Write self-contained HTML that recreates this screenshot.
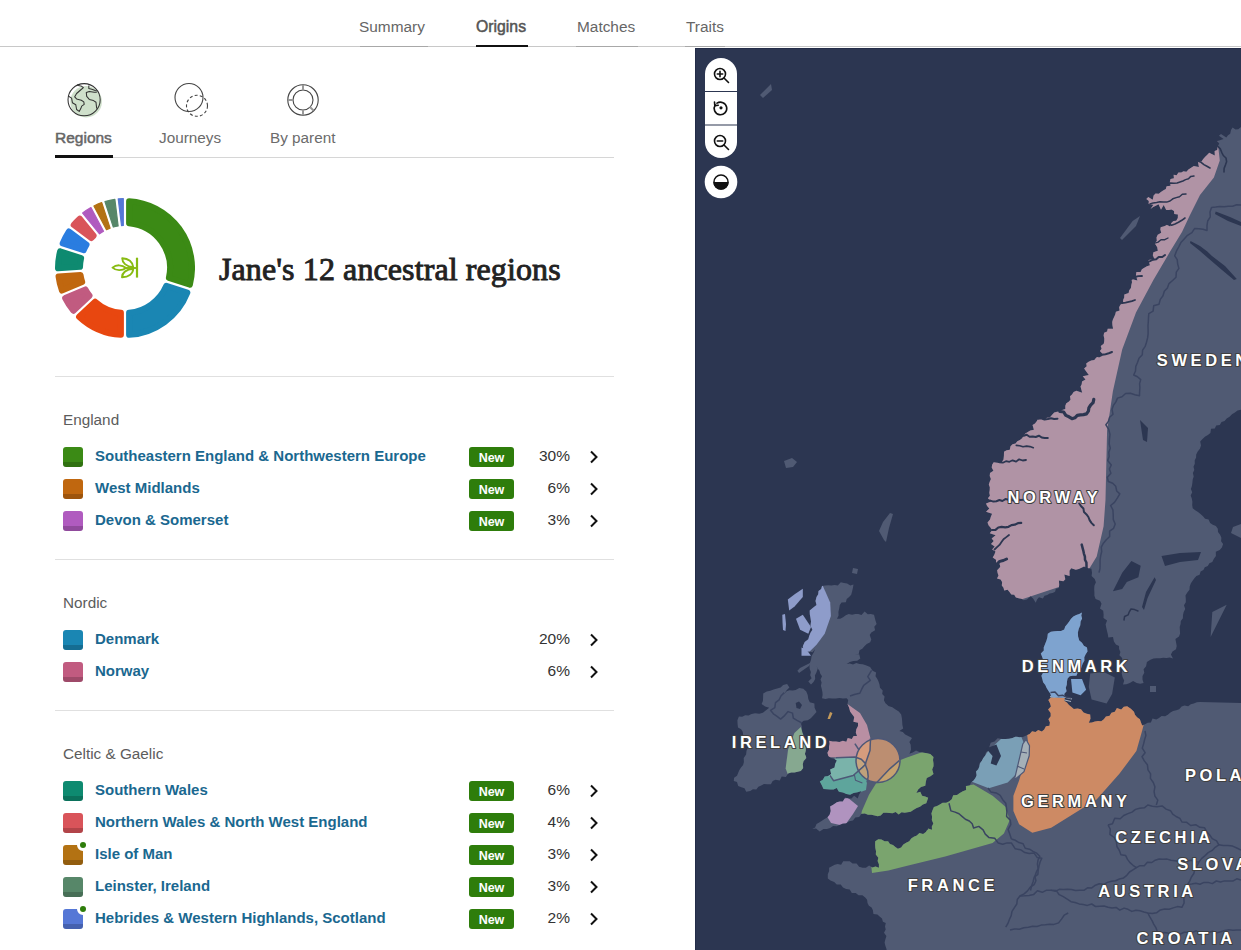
<!DOCTYPE html>
<html><head><meta charset="utf-8">
<style>
*{margin:0;padding:0;box-sizing:border-box}
html,body{width:1241px;height:950px;overflow:hidden;background:#fff;font-family:"Liberation Sans",sans-serif;color:#333}
.abs{position:absolute}
.hdr{position:absolute;left:0;top:0;width:1241px;height:47px;border-bottom:1px solid #c8c8c8}
.tab{position:absolute;top:18px;font-size:15.4px;color:#666;white-space:nowrap;line-height:18px}
.tul{position:absolute;top:46px;height:1px;background:#a8a8a8}
.tabline{position:absolute;height:2px;background:#111;top:45px}
.sub{position:absolute;top:129px;font-size:15.3px;color:#6b6b6b;white-space:nowrap;line-height:18px}
.hr{position:absolute;left:55px;width:559px;height:1px;background:#e0e0e0}
.grp{position:absolute;left:63px;font-size:15.3px;color:#5c5c5c;line-height:18px;white-space:nowrap}
.row{position:absolute;left:63px;width:540px;height:20px}
.sw{position:absolute;left:0;top:0;width:20px;height:20px;border-radius:3px;overflow:hidden}
.sw i{position:absolute;left:0;bottom:0;width:20px;height:5px;background:rgba(0,0,0,.18)}
.nm{position:absolute;left:32px;top:0px;font-size:15px;font-weight:700;color:#1a6890;white-space:nowrap;line-height:18px}
.new{position:absolute;left:406px;top:0;width:45px;height:20px;border-radius:3px;background:#2e7d0b;color:#fff;font-size:12.5px;font-weight:700;text-align:center;line-height:22px}
.pct{position:absolute;right:33px;top:0px;font-size:15.5px;color:#333;line-height:18px}
.chev{position:absolute;left:526px;top:3px}
.map{position:absolute;left:695px;top:48px;width:546px;height:902px;background:#2c3651;overflow:hidden}
</style></head><body>
<div class="hdr"></div>
<div class="tab" style="left:359px">Summary</div><div class="tul" style="left:360px;width:68px"></div>
<div class="tab" style="left:476px;font-weight:400;color:#555;font-size:15.8px;-webkit-text-stroke:0.5px #555">Origins</div>
<div class="tab" style="left:577px">Matches</div><div class="tul" style="left:576px;width:62px"></div>
<div class="tab" style="left:686px">Traits</div><div class="tul" style="left:685px;width:40px"></div>
<div class="tabline" style="left:476px;width:52px"></div>

<!-- subtabs -->
<svg class="abs" style="left:55px;top:75px" width="300" height="50" viewBox="0 0 300 50">
  <circle cx="31.1" cy="26.7" r="15.8" fill="#cfe0cb"/><circle cx="29.1" cy="24.7" r="16.1" fill="none" stroke="#333" stroke-width="1.05"/><path d="M13.2 21 L16.6 23.1 L17.4 27.7 L20.8 29.8 L21.6 34.5 L24.2 36.4 L25.8 33.6 L26.7 31.1 L29.2 29.4 L28.8 26.9 L26.3 25.2 L21.6 23.9 L19.7 21.8 L21.6 18.5 L25 15.5 L28.4 12.6 L26.7 11.3 L23.3 10.5 L22 9.8" fill="none" stroke="#333" stroke-width="1.05" stroke-linejoin="round"/><path d="M33.8 10.5 L33.8 13.4 L36.8 14.3 L40.2 15.5 L41.8 15.9" fill="none" stroke="#333" stroke-width="1.05" stroke-linejoin="round"/><path d="M41.8 17.2 L39.3 17.2 L34.3 16.4 L31.3 17.6 L31.7 21.4 L34.3 24.4 L38.5 25.6 L41 27.3 L41.4 31.1 L41.8 33.6" fill="none" stroke="#333" stroke-width="1.05" stroke-linejoin="round"/>
  <circle cx="134" cy="22.5" r="14" fill="none" stroke="#444" stroke-width="1.1"/>
  <circle cx="142" cy="30.8" r="10.5" fill="none" stroke="#444" stroke-width="1.1" stroke-dasharray="3 2.2"/>
  <circle cx="248" cy="25" r="15.2" fill="none" stroke="#444" stroke-width="1.1"/>
  <circle cx="248" cy="25" r="10" fill="none" stroke="#444" stroke-width="1.1"/>
  <path d="M248 10v5 M248 35v5 M233 25h5 M255 32l3.5 3.5" stroke="#999" stroke-width="2"/>
</svg>
<div class="sub" style="left:55px;font-weight:400;color:#666;font-size:15.5px;-webkit-text-stroke:0.5px #666">Regions</div>
<div class="sub" style="left:159px">Journeys</div>
<div class="sub" style="left:270px">By parent</div>
<div class="abs" style="left:55px;top:157px;width:559px;height:1px;background:#d6d6d6"></div>
<div class="abs" style="left:55px;top:155px;width:58px;height:3px;background:#111"></div>

<!-- donut -->
<svg id="donut" class="abs" style="left:55px;top:198px" width="140" height="140" viewBox="0 0 140 140"><path d="M74.10 3.13A67 67 0 0 1 134.87 86.77L113.89 79.95A45 45 0 0 0 74.09 25.19Z" fill="#3b8a15" stroke="#3b8a15" stroke-width="6" stroke-linejoin="round"/><path d="M132.34 94.56A67 67 0 0 1 74.10 136.87L74.09 114.81A45 45 0 0 0 111.35 87.74Z" fill="#1a86b3" stroke="#1a86b3" stroke-width="6" stroke-linejoin="round"/><path d="M65.90 136.87A67 67 0 0 1 24.06 118.77L40.14 103.66A45 45 0 0 0 65.91 114.81Z" fill="#e84710" stroke="#e84710" stroke-width="6" stroke-linejoin="round"/><path d="M18.45 112.79A67 67 0 0 1 10.15 100.11L30.42 91.42A45 45 0 0 0 34.53 97.69Z" fill="#c15b80" stroke="#c15b80" stroke-width="6" stroke-linejoin="round"/><path d="M6.92 92.58A67 67 0 0 1 3.53 78.40L25.54 76.98A45 45 0 0 0 27.20 83.89Z" fill="#c0670f" stroke="#c0670f" stroke-width="6" stroke-linejoin="round"/><path d="M3.00 70.23A67 67 0 0 1 5.13 53.23L26.11 60.05A45 45 0 0 0 25.02 68.81Z" fill="#0e8a70" stroke="#0e8a70" stroke-width="6" stroke-linejoin="round"/><path d="M7.66 45.44A67 67 0 0 1 13.81 33.52L31.54 46.64A45 45 0 0 0 28.65 52.26Z" fill="#2a7de0" stroke="#2a7de0" stroke-width="6" stroke-linejoin="round"/><path d="M18.68 26.93A67 67 0 0 1 24.73 20.61L38.62 37.75A45 45 0 0 0 36.41 40.05Z" fill="#d9545a" stroke="#d9545a" stroke-width="6" stroke-linejoin="round"/><path d="M27.66 15.01A69.4 69.4 0 0 1 35.93 9.54L48.52 33.21A42.6 42.6 0 0 0 44.53 35.85Z" fill="#b05bbf" stroke="#b05bbf" stroke-width="1.2" stroke-linejoin="round"/><path d="M38.93 7.94A69.4 69.4 0 0 1 46.72 4.62L55.09 30.09A42.6 42.6 0 0 0 51.52 31.62Z" fill="#b37213" stroke="#b37213" stroke-width="1.2" stroke-linejoin="round"/><path d="M49.95 3.56A69.4 69.4 0 0 1 59.86 1.35L63.13 27.96A42.6 42.6 0 0 0 58.32 29.03Z" fill="#578769" stroke="#578769" stroke-width="1.2" stroke-linejoin="round"/><path d="M63.23 0.93A69.4 69.4 0 0 1 68.30 0.62L68.30 27.43A42.6 42.6 0 0 0 66.50 27.54Z" fill="#5577d6" stroke="#5577d6" stroke-width="1.2" stroke-linejoin="round"/><g fill="none" stroke="#88bb12" stroke-width="1.9" stroke-linejoin="round"><path d="M82 59.7V79.6" stroke-width="2.2"/><path d="M70.5 70H81"/><path d="M57.5 69.6C61 66.6 67 66.4 71 70C67 73 61 72.8 57.5 69.6Z"/><path d="M78.3 69.3C77.8 64 73.5 60.3 67.2 60.2C67.2 64.5 71 68.6 78.3 69.3Z"/><path d="M78.3 70.7C77.8 76 73.5 79.4 67 79.3C67.2 75 71 71.4 78.3 70.7Z"/></g></svg>
<div class="abs" style="left:219px;top:251px;font-family:'Liberation Serif',serif;font-size:32px;font-weight:400;letter-spacing:0.1px;-webkit-text-stroke:0.9px #222;color:#222;white-space:nowrap;line-height:36px">Jane's 12 ancestral regions</div>

<div class="hr" style="top:376px"></div>
<div class="grp" style="top:411px">England</div>
<div class="row" style="top:447px"><div class="sw" style="background:#3b8a15"><i></i></div><div class="nm">Southeastern England &amp; Northwestern Europe</div><div class="new">New</div><div class="pct">30%</div><svg class="chev" width="10" height="14" viewBox="0 0 10 14"><path d="M2 1.5L7.5 7L2 12.5" fill="none" stroke="#111" stroke-width="2"/></svg></div>
<div class="row" style="top:479px"><div class="sw" style="background:#c0670f"><i></i></div><div class="nm">West Midlands</div><div class="new">New</div><div class="pct">6%</div><svg class="chev" width="10" height="14" viewBox="0 0 10 14"><path d="M2 1.5L7.5 7L2 12.5" fill="none" stroke="#111" stroke-width="2"/></svg></div>
<div class="row" style="top:511px"><div class="sw" style="background:#b05bbf"><i></i></div><div class="nm">Devon &amp; Somerset</div><div class="new">New</div><div class="pct">3%</div><svg class="chev" width="10" height="14" viewBox="0 0 10 14"><path d="M2 1.5L7.5 7L2 12.5" fill="none" stroke="#111" stroke-width="2"/></svg></div>
<div class="row" style="top:630px"><div class="sw" style="background:#1a86b3"><i></i></div><div class="nm">Denmark</div><div class="pct">20%</div><svg class="chev" width="10" height="14" viewBox="0 0 10 14"><path d="M2 1.5L7.5 7L2 12.5" fill="none" stroke="#111" stroke-width="2"/></svg></div>
<div class="row" style="top:662px"><div class="sw" style="background:#c15b80"><i></i></div><div class="nm">Norway</div><div class="pct">6%</div><svg class="chev" width="10" height="14" viewBox="0 0 10 14"><path d="M2 1.5L7.5 7L2 12.5" fill="none" stroke="#111" stroke-width="2"/></svg></div>
<div class="row" style="top:781px"><div class="sw" style="background:#0e8a70"><i></i></div><div class="nm">Southern Wales</div><div class="new">New</div><div class="pct">6%</div><svg class="chev" width="10" height="14" viewBox="0 0 10 14"><path d="M2 1.5L7.5 7L2 12.5" fill="none" stroke="#111" stroke-width="2"/></svg></div>
<div class="row" style="top:813px"><div class="sw" style="background:#d9545a"><i></i></div><div class="nm">Northern Wales &amp; North West England</div><div class="new">New</div><div class="pct">4%</div><svg class="chev" width="10" height="14" viewBox="0 0 10 14"><path d="M2 1.5L7.5 7L2 12.5" fill="none" stroke="#111" stroke-width="2"/></svg></div>
<div class="row" style="top:845px"><svg class="sw" width="20" height="20" style="border-radius:0;overflow:visible"><path d="M3 0H14A6 6 0 0 0 20 6V17A3 3 0 0 1 17 20H3A3 3 0 0 1 0 17V3A3 3 0 0 1 3 0Z" fill="#b37213"/><path d="M0 15H20V17A3 3 0 0 1 17 20H3A3 3 0 0 1 0 17Z" fill="rgba(0,0,0,.18)"/><circle cx="20" cy="0" r="3" fill="#2e7d0b"/></svg><div class="nm">Isle of Man</div><div class="new">New</div><div class="pct">3%</div><svg class="chev" width="10" height="14" viewBox="0 0 10 14"><path d="M2 1.5L7.5 7L2 12.5" fill="none" stroke="#111" stroke-width="2"/></svg></div>
<div class="row" style="top:877px"><div class="sw" style="background:#578769"><i></i></div><div class="nm">Leinster, Ireland</div><div class="new">New</div><div class="pct">3%</div><svg class="chev" width="10" height="14" viewBox="0 0 10 14"><path d="M2 1.5L7.5 7L2 12.5" fill="none" stroke="#111" stroke-width="2"/></svg></div>
<div class="row" style="top:909px"><svg class="sw" width="20" height="20" style="border-radius:0;overflow:visible"><path d="M3 0H14A6 6 0 0 0 20 6V17A3 3 0 0 1 17 20H3A3 3 0 0 1 0 17V3A3 3 0 0 1 3 0Z" fill="#5577d6"/><path d="M0 15H20V17A3 3 0 0 1 17 20H3A3 3 0 0 1 0 17Z" fill="rgba(0,0,0,.18)"/><circle cx="20" cy="0" r="3" fill="#2e7d0b"/></svg><div class="nm">Hebrides &amp; Western Highlands, Scotland</div><div class="new">New</div><div class="pct">2%</div><svg class="chev" width="10" height="14" viewBox="0 0 10 14"><path d="M2 1.5L7.5 7L2 12.5" fill="none" stroke="#111" stroke-width="2"/></svg></div>
<div class="hr" style="top:559px"></div>
<div class="grp" style="top:594px">Nordic</div>
<div class="hr" style="top:710px"></div>
<div class="grp" style="top:745px">Celtic &amp; Gaelic</div>

<div class="map" id="map"><svg width="546" height="902" viewBox="695 48 546 902" style="display:block">
<defs>
<clipPath id="cS"><path d="M1241.0 127.0 L1238.3 129.2 L1235.5 129.6 L1232.6 127.4 L1231.0 129.9 L1230.2 133.7 L1228.0 135.3 L1226.3 137.6 L1221.0 134.1 L1218.9 135.8 L1223.6 138.9 L1217.5 141.0 L1219.2 143.8 L1217.8 146.3 L1217.2 149.9 L1214.6 150.9 L1214.8 155.5 L1209.2 152.8 L1207.3 154.7 L1205.2 156.7 L1203.2 158.9 L1201.5 161.4 L1197.8 161.0 L1198.9 166.9 L1193.8 166.0 L1191.1 167.7 L1188.4 169.5 L1186.4 171.8 L1183.5 171.3 L1181.2 172.6 L1178.4 172.4 L1176.6 175.3 L1173.6 174.7 L1173.9 178.2 L1170.5 179.1 L1169.8 181.9 L1170.6 185.7 L1166.5 186.3 L1165.8 189.1 L1163.1 190.5 L1160.9 192.1 L1158.7 193.8 L1155.5 193.4 L1153.6 195.5 L1152.7 199.7 L1148.3 196.9 L1146.3 199.0 L1148.8 200.9 L1148.6 203.9 L1153.4 204.8 L1150.5 209.0 L1153.2 206.9 L1155.8 205.8 L1158.5 204.2 L1161.0 209.8 L1163.7 205.0 L1166.2 210.0 L1168.9 209.9 L1171.5 209.5 L1174.0 210.9 L1174.2 214.0 L1177.9 214.6 L1177.8 217.9 L1176.2 220.7 L1173.4 221.1 L1171.3 223.0 L1170.2 226.6 L1166.1 224.4 L1163.5 225.2 L1161.0 226.3 L1160.3 229.2 L1161.2 232.8 L1157.7 234.7 L1156.5 237.5 L1156.8 240.8 L1154.7 243.2 L1157.2 247.3 L1157.8 250.7 L1153.4 252.3 L1152.8 255.2 L1154.4 259.0 L1148.4 260.0 L1149.9 265.2 L1146.9 266.2 L1144.3 267.7 L1141.9 269.3 L1140.6 272.0 L1136.4 272.0 L1135.9 275.3 L1137.4 280.5 L1131.5 279.0 L1132.0 282.2 L1131.3 285.0 L1130.9 287.9 L1129.2 290.3 L1128.6 293.1 L1124.3 294.4 L1124.2 297.4 L1123.1 300.0 L1123.0 303.0 L1120.4 304.8 L1119.1 307.2 L1119.6 310.5 L1115.9 311.7 L1115.2 314.4 L1114.1 316.9 L1112.9 319.4 L1112.2 322.1 L1112.4 325.3 L1113.1 328.8 L1107.7 328.7 L1107.1 331.5 L1104.1 332.8 L1103.6 335.6 L1104.3 338.5 L1104.2 341.2 L1103.7 343.8 L1100.7 345.9 L1101.6 348.8 L1099.9 351.1 L1103.1 354.6 L1099.0 356.4 L1096.3 357.6 L1094.3 360.0 L1091.2 360.4 L1088.6 361.8 L1086.2 363.4 L1086.7 366.3 L1084.1 368.4 L1086.2 371.6 L1088.8 375.0 L1082.7 376.2 L1085.5 379.6 L1082.0 381.5 L1081.7 384.2 L1080.5 386.6 L1082.2 392.7 L1076.4 390.7 L1073.6 392.0 L1072.0 394.5 L1070.0 396.3 L1070.5 399.8 L1068.7 401.8 L1066.3 403.3 L1065.3 405.8 L1065.3 408.9 L1062.2 409.9 L1059.9 411.5 L1057.0 411.8 L1054.2 412.6 L1051.9 414.9 L1049.8 417.5 L1046.9 417.8 L1044.6 420.0 L1041.1 418.7 L1038.1 418.7 L1036.7 421.2 L1035.0 423.4 L1032.5 424.9 L1033.9 429.8 L1030.3 430.4 L1027.8 432.0 L1025.3 433.5 L1023.6 435.7 L1022.1 438.3 L1019.9 439.9 L1017.3 441.2 L1015.5 443.5 L1012.5 444.2 L1010.5 446.2 L1009.8 449.7 L1006.6 450.2 L1004.0 451.7 L1003.9 455.8 L1003.5 459.5 L1001.8 462.0 L998.8 463.1 L993.7 462.2 L992.1 464.7 L991.7 467.5 L993.4 470.7 L990.0 473.1 L989.7 475.9 L990.9 479.0 L989.7 481.7 L988.8 484.4 L989.8 487.3 L989.7 490.1 L989.3 492.8 L989.9 495.7 L987.9 498.2 L991.1 501.6 L986.0 503.5 L987.1 506.1 L989.3 508.6 L986.0 511.7 L992.1 513.8 L990.8 516.7 L990.0 519.5 L987.5 522.6 L988.5 525.2 L990.6 527.7 L992.1 530.2 L989.8 533.3 L995.6 535.2 L991.6 538.5 L993.7 541.0 L991.0 544.1 L994.7 546.4 L992.1 549.5 L995.5 551.6 L994.4 554.5 L992.7 557.5 L996.0 559.7 L996.0 562.4 L999.9 564.4 L1000.2 567.1 L997.1 570.3 L997.6 573.0 L998.5 575.5 L997.0 578.5 L1000.6 579.6 L1002.1 582.0 L1001.8 585.4 L1003.5 587.7 L1004.2 590.6 L1007.6 589.8 L1009.5 592.1 L1011.3 594.6 L1014.2 594.8 L1015.9 597.5 L1018.6 598.2 L1021.3 598.8 L1023.6 600.3 L1026.9 599.6 L1030.7 596.3 L1033.3 598.8 L1035.7 602.7 L1037.1 599.6 L1039.0 597.2 L1042.9 598.4 L1044.5 595.7 L1047.3 595.0 L1049.7 593.5 L1052.6 593.0 L1055.1 591.7 L1055.9 588.8 L1058.9 588.0 L1059.2 584.6 L1058.9 580.4 L1063.4 581.2 L1065.3 579.3 L1064.3 574.5 L1069.6 576.1 L1069.5 570.8 L1071.2 568.2 L1075.8 569.8 L1078.8 569.1 L1081.5 567.8 L1084.0 566.4 L1087.5 568.1 L1091.4 568.8 L1092.0 572.7 L1091.6 576.1 L1094.7 579.1 L1095.9 582.3 L1094.4 585.8 L1094.2 589.2 L1094.4 592.5 L1094.4 595.8 L1095.6 599.1 L1100.0 600.7 L1101.5 603.8 L1100.0 608.5 L1103.2 610.8 L1103.6 614.4 L1103.5 617.9 L1107.1 620.6 L1105.6 624.3 L1106.2 627.6 L1107.0 630.9 L1107.8 634.2 L1108.3 637.5 L1113.0 637.1 L1113.9 641.5 L1115.9 644.4 L1119.0 646.0 L1119.1 649.1 L1120.4 652.0 L1119.4 655.2 L1122.1 658.0 L1122.5 661.0 L1120.1 664.3 L1121.4 667.3 L1122.5 670.2 L1121.7 673.4 L1122.5 677.0 L1124.2 680.5 L1123.0 684.4 L1126.4 684.3 L1129.8 683.0 L1133.1 681.0 L1136.7 682.9 L1140.2 683.7 L1143.6 683.0 L1142.5 679.6 L1142.5 676.1 L1144.3 672.7 L1143.6 669.3 L1146.1 666.3 L1146.9 662.1 L1150.4 659.7 L1153.5 658.5 L1156.7 658.3 L1160.0 658.3 L1163.3 657.8 L1166.5 657.9 L1169.8 657.6 L1173.0 658.5 L1170.9 654.5 L1172.5 651.6 L1176.0 649.2 L1176.7 646.0 L1176.1 642.5 L1175.4 638.9 L1179.0 636.6 L1180.1 633.5 L1179.9 630.3 L1179.7 627.1 L1180.6 624.1 L1180.8 621.0 L1182.9 618.2 L1183.0 615.0 L1183.7 612.0 L1185.2 609.0 L1184.0 605.3 L1185.8 602.3 L1185.8 599.0 L1185.5 595.5 L1187.3 592.6 L1189.5 589.7 L1189.7 586.4 L1190.9 583.3 L1192.6 580.7 L1194.4 578.3 L1196.4 576.0 L1199.6 574.8 L1200.6 571.6 L1203.4 570.1 L1204.8 567.2 L1207.8 565.9 L1209.4 563.3 L1212.3 561.9 L1213.9 558.8 L1215.9 555.9 L1215.8 551.8 L1219.7 550.1 L1221.9 547.4 L1223.1 544.0 L1221.1 541.3 L1221.4 537.7 L1220.1 534.8 L1218.0 532.1 L1217.8 528.7 L1215.9 526.0 L1212.8 524.7 L1210.1 522.9 L1208.6 519.5 L1205.1 518.7 L1203.0 516.2 L1200.5 514.1 L1198.0 512.0 L1195.2 510.3 L1192.7 508.2 L1192.2 505.0 L1192.4 501.8 L1191.8 498.6 L1190.7 495.4 L1192.2 492.3 L1190.9 489.1 L1191.9 485.9 L1192.4 482.7 L1192.7 479.5 L1193.7 476.4 L1192.9 473.1 L1194.3 470.1 L1193.5 466.8 L1194.8 463.8 L1194.7 460.6 L1196.1 457.6 L1196.2 454.4 L1197.7 451.4 L1199.9 448.8 L1201.0 445.6 L1200.2 441.5 L1202.5 438.9 L1205.2 436.5 L1207.9 434.9 L1210.4 433.0 L1211.0 428.8 L1214.8 428.5 L1216.2 425.5 L1219.8 424.9 L1221.5 422.1 L1224.6 420.9 L1226.7 418.6 L1229.5 416.7 L1232.0 414.3 L1234.9 412.6 L1237.5 410.4 L1241.0 409.7Z"/></clipPath>
<clipPath id="cGB"><path d="M822.0 586.0 L825.1 585.6 L828.3 585.2 L831.4 585.4 L834.6 585.1 L837.8 585.6 L840.8 582.2 L844.0 583.1 L847.1 583.4 L850.4 585.5 L853.5 584.6 L852.9 588.0 L852.1 591.4 L851.2 594.7 L849.1 596.9 L846.7 598.9 L845.9 602.3 L841.5 602.5 L839.8 605.1 L839.2 608.5 L838.4 612.0 L838.6 615.6 L837.0 618.8 L840.2 618.7 L843.1 617.3 L845.8 615.3 L848.7 614.1 L852.1 614.7 L855.2 614.1 L858.4 614.0 L861.5 615.1 L864.6 611.6 L867.7 614.2 L870.9 614.1 L874.0 614.7 L875.4 620.2 L876.6 624.0 L874.3 626.7 L875.1 630.3 L871.3 632.5 L869.7 635.1 L871.3 639.4 L870.2 642.3 L866.8 644.0 L864.4 646.2 L862.3 648.7 L859.5 650.2 L858.7 654.1 L854.8 654.4 L859.2 654.3 L860.3 658.5 L857.2 660.8 L853.3 660.9 L849.8 662.1 L846.6 664.0 L849.8 663.6 L853.0 664.4 L856.3 663.0 L859.5 663.9 L862.7 664.3 L865.8 665.3 L870.1 666.9 L872.6 670.8 L876.1 672.5 L875.5 676.2 L877.2 678.8 L878.5 681.6 L879.5 684.5 L880.0 687.8 L882.7 690.4 L882.2 694.0 L884.6 696.6 L883.9 700.3 L885.5 703.2 L888.5 705.9 L892.3 707.3 L895.6 709.5 L898.8 711.6 L901.2 714.4 L901.9 718.3 L902.2 721.7 L902.4 725.1 L903.2 728.4 L899.4 731.0 L902.8 731.9 L905.2 734.4 L908.2 736.0 L912.0 738.1 L909.4 742.0 L910.7 744.8 L911.0 749.4 L909.5 753.7 L912.7 752.5 L916.0 750.5 L919.3 751.9 L922.6 752.5 L925.9 753.1 L930.3 753.9 L933.5 756.9 L933.0 760.0 L933.5 763.2 L933.5 766.3 L932.2 769.4 L933.5 773.9 L930.5 776.2 L926.8 778.1 L925.9 781.5 L925.3 785.8 L921.0 787.1 L918.2 789.5 L916.4 792.9 L920.3 791.8 L922.1 795.8 L925.2 796.6 L928.2 797.7 L926.3 803.3 L922.9 804.5 L920.0 806.7 L916.7 808.0 L913.7 809.8 L910.7 811.8 L907.7 812.2 L904.7 812.7 L901.6 812.3 L898.7 814.6 L895.6 811.9 L892.6 813.2 L889.5 812.9 L886.5 812.8 L883.4 812.8 L880.7 815.6 L877.7 816.3 L874.6 815.4 L871.4 814.7 L868.0 814.8 L864.8 813.4 L861.4 813.7 L859.2 816.9 L855.3 817.5 L853.0 820.4 L849.3 821.3 L846.3 823.2 L842.9 823.5 L839.8 824.8 L836.7 826.2 L833.1 825.9 L830.2 827.9 L827.0 828.9 L823.5 828.9 L819.7 831.5 L816.0 828.5 L812.2 828.9 L815.1 827.5 L816.5 824.1 L819.2 822.5 L821.9 820.8 L824.5 819.1 L827.3 817.5 L829.6 814.7 L830.7 811.1 L830.1 806.5 L833.6 804.5 L836.8 802.3 L839.7 801.5 L842.8 801.5 L845.2 797.5 L848.5 798.6 L851.5 798.6 L854.1 795.7 L857.7 798.5 L859.1 794.5 L861.4 791.0 L857.6 792.3 L853.6 792.9 L850.1 794.8 L846.3 794.1 L842.9 792.5 L838.9 792.1 L836.8 788.1 L833.6 789.5 L830.2 789.4 L826.9 789.2 L823.5 789.1 L821.8 785.2 L819.8 781.5 L822.8 779.8 L824.7 776.5 L828.3 775.9 L831.1 773.9 L830.1 769.5 L834.5 767.5 L835.2 763.8 L836.8 760.6 L834.1 758.8 L830.9 757.9 L828.3 755.9 L827.4 752.8 L829.0 749.8 L829.0 746.8 L829.6 743.8 L829.2 740.7 L832.6 741.6 L836.0 741.4 L839.4 741.9 L842.9 740.7 L846.3 741.7 L847.7 737.9 L851.8 739.1 L853.6 736.1 L857.0 736.0 L855.8 732.6 L856.3 729.3 L858.0 726.0 L858.0 722.7 L853.4 721.7 L854.2 717.0 L852.1 714.2 L850.1 711.4 L849.1 707.7 L847.5 704.0 L848.2 700.0 L846.6 698.2 L843.0 698.5 L839.5 698.1 L835.9 698.5 L832.4 698.5 L828.8 698.2 L825.4 698.9 L822.0 698.2 L822.6 695.1 L822.4 691.9 L821.7 688.8 L820.9 685.7 L821.6 682.6 L820.5 679.4 L822.0 676.3 L820.3 673.7 L819.5 670.7 L817.5 668.2 L816.5 665.3 L817.6 668.9 L816.5 672.2 L814.9 675.5 L815.2 679.0 L813.5 682.0 L811.0 684.5 L808.3 681.4 L811.6 678.3 L810.2 675.2 L810.9 672.1 L809.7 669.1 L809.5 666.0 L809.9 662.9 L811.0 659.8 L811.6 655.9 L813.7 652.5 L815.2 648.9 L812.5 652.2 L808.3 651.6 L803.8 650.7 L802.8 646.2 L804.7 642.0 L808.3 639.3 L809.2 635.9 L810.5 632.7 L812.4 629.7 L810.5 625.8 L811.0 621.5 L810.5 617.9 L809.8 614.3 L809.7 610.6 L813.0 607.7 L816.5 605.1 L815.5 601.0 L816.5 596.9 L818.2 594.3 L818.5 591.1 L821.2 589.0Z"/></clipPath>
<clipPath id="cIE"><path d="M761.6 704.0 L762.9 700.9 L763.1 697.3 L763.2 693.6 L766.7 691.4 L770.3 690.8 L773.6 689.4 L777.1 688.6 L780.6 687.6 L783.1 685.0 L787.1 684.1 L789.4 687.6 L786.4 690.4 L784.3 693.9 L786.6 691.3 L789.4 690.2 L792.7 690.6 L795.7 690.1 L799.3 688.1 L803.3 688.8 L806.3 691.5 L807.7 695.0 L808.3 698.9 L809.8 702.3 L814.4 703.5 L814.6 707.8 L816.5 712.0 L813.4 715.4 L810.8 718.2 L807.8 720.3 L803.7 720.7 L800.8 722.9 L801.9 726.6 L802.0 730.5 L803.0 733.8 L804.6 737.0 L803.2 740.7 L804.5 744.0 L805.8 747.2 L805.8 750.7 L804.9 754.0 L806.7 758.1 L803.6 760.9 L802.8 764.2 L803.3 767.9 L800.8 770.9 L797.7 771.8 L794.5 772.6 L791.2 772.5 L788.1 773.4 L785.9 776.9 L781.7 776.4 L779.8 780.5 L775.5 779.7 L772.7 781.0 L770.9 784.3 L767.4 784.2 L764.0 784.1 L761.2 785.4 L758.4 786.7 L756.3 789.5 L752.9 789.3 L750.3 791.1 L746.2 791.7 L744.5 788.3 L741.3 787.2 L738.2 786.1 L737.0 782.0 L733.8 781.0 L734.1 777.7 L737.0 775.8 L738.1 772.9 L739.4 770.1 L741.0 767.5 L743.1 765.1 L743.9 762.1 L743.7 758.1 L746.1 754.6 L746.5 750.7 L749.0 745.7 L748.4 742.6 L746.6 740.1 L744.4 737.7 L743.2 734.9 L742.7 731.8 L741.1 729.2 L738.0 727.6 L737.6 724.2 L737.4 720.3 L738.9 716.6 L742.2 716.7 L745.2 715.3 L748.5 715.4 L751.5 714.1 L755.2 713.2 L759.2 713.8 L762.9 712.8 L766.0 710.2 L769.2 707.8 L765.1 706.4Z"/></clipPath>
<clipPath id="cC"><path d="M887.1 952.0 L886.4 948.8 L885.3 945.6 L884.6 942.5 L885.4 939.2 L886.4 935.9 L884.0 932.8 L885.7 929.5 L885.0 926.4 L885.8 923.1 L882.9 921.7 L882.0 918.4 L879.6 916.5 L877.4 914.4 L873.4 914.1 L872.9 910.3 L871.6 907.6 L868.9 905.7 L867.5 903.0 L867.1 899.8 L865.2 897.4 L862.4 895.3 L858.5 895.3 L855.8 893.0 L851.8 893.1 L849.7 889.6 L846.1 889.0 L843.0 887.5 L840.7 884.5 L836.7 884.6 L834.2 881.9 L830.5 880.6 L827.8 878.5 L827.8 874.2 L829.1 871.1 L829.1 867.7 L831.9 866.3 L834.7 864.8 L837.7 864.1 L841.1 864.7 L843.2 861.2 L846.5 861.3 L849.7 861.3 L852.6 863.6 L856.6 863.6 L859.1 866.7 L862.6 867.7 L865.9 867.7 L869.1 865.4 L872.4 867.6 L875.6 866.6 L878.9 867.7 L878.9 864.3 L877.6 861.1 L878.3 857.7 L875.8 854.6 L876.0 851.2 L875.3 847.9 L875.1 844.6 L875.2 841.2 L878.3 839.3 L881.5 839.6 L884.6 841.2 L888.1 841.3 L890.0 844.0 L893.0 845.1 L895.4 846.9 L897.9 848.8 L901.1 847.5 L903.3 844.6 L906.1 842.7 L909.2 841.2 L911.2 838.5 L913.8 836.8 L916.8 835.5 L919.4 833.1 L923.1 833.9 L925.9 832.1 L928.0 828.4 L932.0 829.8 L931.8 826.5 L933.3 823.4 L931.8 820.0 L932.1 816.7 L931.4 813.4 L932.5 810.2 L933.9 807.1 L937.0 806.1 L939.8 804.4 L942.6 802.8 L946.1 802.8 L949.0 801.4 L951.7 799.3 L953.2 795.3 L957.0 795.0 L959.8 792.9 L962.8 791.3 L966.1 790.1 L965.9 786.1 L969.8 785.3 L971.0 782.4 L973.6 780.6 L975.4 778.0 L976.6 775.2 L976.0 771.6 L978.2 769.2 L979.4 766.3 L979.7 763.1 L981.8 760.7 L983.1 757.9 L985.2 755.5 L986.0 752.2 L988.8 750.3 L989.4 746.4 L990.7 742.7 L994.5 741.5 L997.6 738.3 L1002.0 738.9 L1005.5 739.1 L1009.0 738.7 L1012.5 738.0 L1015.8 736.4 L1019.4 737.3 L1022.9 737.0 L1026.7 735.2 L1029.6 734.0 L1032.1 731.2 L1035.5 732.0 L1038.2 729.9 L1041.8 731.4 L1044.2 729.4 L1045.9 726.3 L1049.4 725.7 L1049.9 722.5 L1048.4 719.2 L1050.7 716.2 L1050.6 713.0 L1048.1 709.6 L1050.9 706.6 L1050.0 703.3 L1048.3 700.0 L1051.2 697.0 L1050.4 693.7 L1048.5 690.9 L1046.6 688.0 L1045.3 684.9 L1043.1 682.3 L1042.3 678.9 L1041.4 675.8 L1043.0 672.8 L1039.6 669.7 L1042.3 666.6 L1041.4 663.3 L1043.3 660.2 L1042.2 656.9 L1040.8 653.6 L1043.8 650.6 L1043.7 647.4 L1045.1 644.1 L1046.4 640.7 L1047.4 637.3 L1047.8 633.7 L1050.8 631.8 L1054.2 631.3 L1057.6 631.0 L1061.0 630.9 L1064.2 629.6 L1065.2 626.4 L1067.3 624.0 L1069.2 621.4 L1071.0 618.7 L1073.3 616.4 L1076.2 615.1 L1079.2 613.9 L1082.0 612.5 L1081.3 615.4 L1082.1 618.6 L1080.6 621.4 L1080.3 625.2 L1078.8 628.7 L1077.9 632.4 L1078.1 636.6 L1079.3 640.6 L1082.0 642.8 L1083.9 645.7 L1087.0 647.6 L1087.5 651.5 L1085.7 654.2 L1084.3 657.2 L1084.4 660.7 L1082.7 663.5 L1081.7 666.6 L1080.6 669.7 L1077.9 672.0 L1076.4 675.7 L1072.9 675.8 L1069.7 676.2 L1067.6 678.5 L1067.0 681.6 L1066.8 684.8 L1065.8 687.8 L1066.6 691.2 L1064.2 693.9 L1064.9 697.3 L1064.2 700.8 L1066.9 702.5 L1069.0 704.9 L1071.5 706.9 L1073.8 709.0 L1077.6 708.4 L1081.0 709.2 L1083.6 712.4 L1086.8 713.7 L1090.2 714.5 L1090.5 718.8 L1088.8 722.7 L1091.9 722.5 L1094.9 721.4 L1098.0 721.1 L1101.2 721.3 L1103.8 719.3 L1105.9 716.4 L1109.6 715.8 L1111.4 712.7 L1114.8 711.7 L1116.9 708.0 L1121.2 709.5 L1123.8 706.8 L1127.2 706.3 L1130.9 708.7 L1134.0 711.7 L1135.0 714.8 L1137.1 717.3 L1139.9 719.3 L1141.0 722.4 L1142.2 725.4 L1145.0 724.2 L1147.7 722.8 L1150.9 722.4 L1152.5 718.4 L1156.3 719.5 L1159.0 718.0 L1161.6 716.0 L1165.1 716.3 L1167.8 714.7 L1170.4 712.6 L1173.1 710.9 L1176.3 710.3 L1179.2 709.3 L1181.6 706.6 L1184.5 705.6 L1188.2 706.2 L1190.8 704.3 L1193.8 703.4 L1196.8 702.3 L1200.0 702.0 L1241.0 703.0 L1242.0 952.0Z"/></clipPath>
</defs>
<rect x="695" y="48" width="546" height="902" fill="#2c3651"/>
<path d="M1241.0 127.0 L1238.3 129.2 L1235.5 129.6 L1232.6 127.4 L1231.0 129.9 L1230.2 133.7 L1228.0 135.3 L1226.3 137.6 L1221.0 134.1 L1218.9 135.8 L1223.6 138.9 L1217.5 141.0 L1219.2 143.8 L1217.8 146.3 L1217.2 149.9 L1214.6 150.9 L1214.8 155.5 L1209.2 152.8 L1207.3 154.7 L1205.2 156.7 L1203.2 158.9 L1201.5 161.4 L1197.8 161.0 L1198.9 166.9 L1193.8 166.0 L1191.1 167.7 L1188.4 169.5 L1186.4 171.8 L1183.5 171.3 L1181.2 172.6 L1178.4 172.4 L1176.6 175.3 L1173.6 174.7 L1173.9 178.2 L1170.5 179.1 L1169.8 181.9 L1170.6 185.7 L1166.5 186.3 L1165.8 189.1 L1163.1 190.5 L1160.9 192.1 L1158.7 193.8 L1155.5 193.4 L1153.6 195.5 L1152.7 199.7 L1148.3 196.9 L1146.3 199.0 L1148.8 200.9 L1148.6 203.9 L1153.4 204.8 L1150.5 209.0 L1153.2 206.9 L1155.8 205.8 L1158.5 204.2 L1161.0 209.8 L1163.7 205.0 L1166.2 210.0 L1168.9 209.9 L1171.5 209.5 L1174.0 210.9 L1174.2 214.0 L1177.9 214.6 L1177.8 217.9 L1176.2 220.7 L1173.4 221.1 L1171.3 223.0 L1170.2 226.6 L1166.1 224.4 L1163.5 225.2 L1161.0 226.3 L1160.3 229.2 L1161.2 232.8 L1157.7 234.7 L1156.5 237.5 L1156.8 240.8 L1154.7 243.2 L1157.2 247.3 L1157.8 250.7 L1153.4 252.3 L1152.8 255.2 L1154.4 259.0 L1148.4 260.0 L1149.9 265.2 L1146.9 266.2 L1144.3 267.7 L1141.9 269.3 L1140.6 272.0 L1136.4 272.0 L1135.9 275.3 L1137.4 280.5 L1131.5 279.0 L1132.0 282.2 L1131.3 285.0 L1130.9 287.9 L1129.2 290.3 L1128.6 293.1 L1124.3 294.4 L1124.2 297.4 L1123.1 300.0 L1123.0 303.0 L1120.4 304.8 L1119.1 307.2 L1119.6 310.5 L1115.9 311.7 L1115.2 314.4 L1114.1 316.9 L1112.9 319.4 L1112.2 322.1 L1112.4 325.3 L1113.1 328.8 L1107.7 328.7 L1107.1 331.5 L1104.1 332.8 L1103.6 335.6 L1104.3 338.5 L1104.2 341.2 L1103.7 343.8 L1100.7 345.9 L1101.6 348.8 L1099.9 351.1 L1103.1 354.6 L1099.0 356.4 L1096.3 357.6 L1094.3 360.0 L1091.2 360.4 L1088.6 361.8 L1086.2 363.4 L1086.7 366.3 L1084.1 368.4 L1086.2 371.6 L1088.8 375.0 L1082.7 376.2 L1085.5 379.6 L1082.0 381.5 L1081.7 384.2 L1080.5 386.6 L1082.2 392.7 L1076.4 390.7 L1073.6 392.0 L1072.0 394.5 L1070.0 396.3 L1070.5 399.8 L1068.7 401.8 L1066.3 403.3 L1065.3 405.8 L1065.3 408.9 L1062.2 409.9 L1059.9 411.5 L1057.0 411.8 L1054.2 412.6 L1051.9 414.9 L1049.8 417.5 L1046.9 417.8 L1044.6 420.0 L1041.1 418.7 L1038.1 418.7 L1036.7 421.2 L1035.0 423.4 L1032.5 424.9 L1033.9 429.8 L1030.3 430.4 L1027.8 432.0 L1025.3 433.5 L1023.6 435.7 L1022.1 438.3 L1019.9 439.9 L1017.3 441.2 L1015.5 443.5 L1012.5 444.2 L1010.5 446.2 L1009.8 449.7 L1006.6 450.2 L1004.0 451.7 L1003.9 455.8 L1003.5 459.5 L1001.8 462.0 L998.8 463.1 L993.7 462.2 L992.1 464.7 L991.7 467.5 L993.4 470.7 L990.0 473.1 L989.7 475.9 L990.9 479.0 L989.7 481.7 L988.8 484.4 L989.8 487.3 L989.7 490.1 L989.3 492.8 L989.9 495.7 L987.9 498.2 L991.1 501.6 L986.0 503.5 L987.1 506.1 L989.3 508.6 L986.0 511.7 L992.1 513.8 L990.8 516.7 L990.0 519.5 L987.5 522.6 L988.5 525.2 L990.6 527.7 L992.1 530.2 L989.8 533.3 L995.6 535.2 L991.6 538.5 L993.7 541.0 L991.0 544.1 L994.7 546.4 L992.1 549.5 L995.5 551.6 L994.4 554.5 L992.7 557.5 L996.0 559.7 L996.0 562.4 L999.9 564.4 L1000.2 567.1 L997.1 570.3 L997.6 573.0 L998.5 575.5 L997.0 578.5 L1000.6 579.6 L1002.1 582.0 L1001.8 585.4 L1003.5 587.7 L1004.2 590.6 L1007.6 589.8 L1009.5 592.1 L1011.3 594.6 L1014.2 594.8 L1015.9 597.5 L1018.6 598.2 L1021.3 598.8 L1023.6 600.3 L1026.9 599.6 L1030.7 596.3 L1033.3 598.8 L1035.7 602.7 L1037.1 599.6 L1039.0 597.2 L1042.9 598.4 L1044.5 595.7 L1047.3 595.0 L1049.7 593.5 L1052.6 593.0 L1055.1 591.7 L1055.9 588.8 L1058.9 588.0 L1059.2 584.6 L1058.9 580.4 L1063.4 581.2 L1065.3 579.3 L1064.3 574.5 L1069.6 576.1 L1069.5 570.8 L1071.2 568.2 L1075.8 569.8 L1078.8 569.1 L1081.5 567.8 L1084.0 566.4 L1087.5 568.1 L1091.4 568.8 L1092.0 572.7 L1091.6 576.1 L1094.7 579.1 L1095.9 582.3 L1094.4 585.8 L1094.2 589.2 L1094.4 592.5 L1094.4 595.8 L1095.6 599.1 L1100.0 600.7 L1101.5 603.8 L1100.0 608.5 L1103.2 610.8 L1103.6 614.4 L1103.5 617.9 L1107.1 620.6 L1105.6 624.3 L1106.2 627.6 L1107.0 630.9 L1107.8 634.2 L1108.3 637.5 L1113.0 637.1 L1113.9 641.5 L1115.9 644.4 L1119.0 646.0 L1119.1 649.1 L1120.4 652.0 L1119.4 655.2 L1122.1 658.0 L1122.5 661.0 L1120.1 664.3 L1121.4 667.3 L1122.5 670.2 L1121.7 673.4 L1122.5 677.0 L1124.2 680.5 L1123.0 684.4 L1126.4 684.3 L1129.8 683.0 L1133.1 681.0 L1136.7 682.9 L1140.2 683.7 L1143.6 683.0 L1142.5 679.6 L1142.5 676.1 L1144.3 672.7 L1143.6 669.3 L1146.1 666.3 L1146.9 662.1 L1150.4 659.7 L1153.5 658.5 L1156.7 658.3 L1160.0 658.3 L1163.3 657.8 L1166.5 657.9 L1169.8 657.6 L1173.0 658.5 L1170.9 654.5 L1172.5 651.6 L1176.0 649.2 L1176.7 646.0 L1176.1 642.5 L1175.4 638.9 L1179.0 636.6 L1180.1 633.5 L1179.9 630.3 L1179.7 627.1 L1180.6 624.1 L1180.8 621.0 L1182.9 618.2 L1183.0 615.0 L1183.7 612.0 L1185.2 609.0 L1184.0 605.3 L1185.8 602.3 L1185.8 599.0 L1185.5 595.5 L1187.3 592.6 L1189.5 589.7 L1189.7 586.4 L1190.9 583.3 L1192.6 580.7 L1194.4 578.3 L1196.4 576.0 L1199.6 574.8 L1200.6 571.6 L1203.4 570.1 L1204.8 567.2 L1207.8 565.9 L1209.4 563.3 L1212.3 561.9 L1213.9 558.8 L1215.9 555.9 L1215.8 551.8 L1219.7 550.1 L1221.9 547.4 L1223.1 544.0 L1221.1 541.3 L1221.4 537.7 L1220.1 534.8 L1218.0 532.1 L1217.8 528.7 L1215.9 526.0 L1212.8 524.7 L1210.1 522.9 L1208.6 519.5 L1205.1 518.7 L1203.0 516.2 L1200.5 514.1 L1198.0 512.0 L1195.2 510.3 L1192.7 508.2 L1192.2 505.0 L1192.4 501.8 L1191.8 498.6 L1190.7 495.4 L1192.2 492.3 L1190.9 489.1 L1191.9 485.9 L1192.4 482.7 L1192.7 479.5 L1193.7 476.4 L1192.9 473.1 L1194.3 470.1 L1193.5 466.8 L1194.8 463.8 L1194.7 460.6 L1196.1 457.6 L1196.2 454.4 L1197.7 451.4 L1199.9 448.8 L1201.0 445.6 L1200.2 441.5 L1202.5 438.9 L1205.2 436.5 L1207.9 434.9 L1210.4 433.0 L1211.0 428.8 L1214.8 428.5 L1216.2 425.5 L1219.8 424.9 L1221.5 422.1 L1224.6 420.9 L1226.7 418.6 L1229.5 416.7 L1232.0 414.3 L1234.9 412.6 L1237.5 410.4 L1241.0 409.7Z" fill="#505a73"/>
<path d="M822.0 586.0 L825.1 585.6 L828.3 585.2 L831.4 585.4 L834.6 585.1 L837.8 585.6 L840.8 582.2 L844.0 583.1 L847.1 583.4 L850.4 585.5 L853.5 584.6 L852.9 588.0 L852.1 591.4 L851.2 594.7 L849.1 596.9 L846.7 598.9 L845.9 602.3 L841.5 602.5 L839.8 605.1 L839.2 608.5 L838.4 612.0 L838.6 615.6 L837.0 618.8 L840.2 618.7 L843.1 617.3 L845.8 615.3 L848.7 614.1 L852.1 614.7 L855.2 614.1 L858.4 614.0 L861.5 615.1 L864.6 611.6 L867.7 614.2 L870.9 614.1 L874.0 614.7 L875.4 620.2 L876.6 624.0 L874.3 626.7 L875.1 630.3 L871.3 632.5 L869.7 635.1 L871.3 639.4 L870.2 642.3 L866.8 644.0 L864.4 646.2 L862.3 648.7 L859.5 650.2 L858.7 654.1 L854.8 654.4 L859.2 654.3 L860.3 658.5 L857.2 660.8 L853.3 660.9 L849.8 662.1 L846.6 664.0 L849.8 663.6 L853.0 664.4 L856.3 663.0 L859.5 663.9 L862.7 664.3 L865.8 665.3 L870.1 666.9 L872.6 670.8 L876.1 672.5 L875.5 676.2 L877.2 678.8 L878.5 681.6 L879.5 684.5 L880.0 687.8 L882.7 690.4 L882.2 694.0 L884.6 696.6 L883.9 700.3 L885.5 703.2 L888.5 705.9 L892.3 707.3 L895.6 709.5 L898.8 711.6 L901.2 714.4 L901.9 718.3 L902.2 721.7 L902.4 725.1 L903.2 728.4 L899.4 731.0 L902.8 731.9 L905.2 734.4 L908.2 736.0 L912.0 738.1 L909.4 742.0 L910.7 744.8 L911.0 749.4 L909.5 753.7 L912.7 752.5 L916.0 750.5 L919.3 751.9 L922.6 752.5 L925.9 753.1 L930.3 753.9 L933.5 756.9 L933.0 760.0 L933.5 763.2 L933.5 766.3 L932.2 769.4 L933.5 773.9 L930.5 776.2 L926.8 778.1 L925.9 781.5 L925.3 785.8 L921.0 787.1 L918.2 789.5 L916.4 792.9 L920.3 791.8 L922.1 795.8 L925.2 796.6 L928.2 797.7 L926.3 803.3 L922.9 804.5 L920.0 806.7 L916.7 808.0 L913.7 809.8 L910.7 811.8 L907.7 812.2 L904.7 812.7 L901.6 812.3 L898.7 814.6 L895.6 811.9 L892.6 813.2 L889.5 812.9 L886.5 812.8 L883.4 812.8 L880.7 815.6 L877.7 816.3 L874.6 815.4 L871.4 814.7 L868.0 814.8 L864.8 813.4 L861.4 813.7 L859.2 816.9 L855.3 817.5 L853.0 820.4 L849.3 821.3 L846.3 823.2 L842.9 823.5 L839.8 824.8 L836.7 826.2 L833.1 825.9 L830.2 827.9 L827.0 828.9 L823.5 828.9 L819.7 831.5 L816.0 828.5 L812.2 828.9 L815.1 827.5 L816.5 824.1 L819.2 822.5 L821.9 820.8 L824.5 819.1 L827.3 817.5 L829.6 814.7 L830.7 811.1 L830.1 806.5 L833.6 804.5 L836.8 802.3 L839.7 801.5 L842.8 801.5 L845.2 797.5 L848.5 798.6 L851.5 798.6 L854.1 795.7 L857.7 798.5 L859.1 794.5 L861.4 791.0 L857.6 792.3 L853.6 792.9 L850.1 794.8 L846.3 794.1 L842.9 792.5 L838.9 792.1 L836.8 788.1 L833.6 789.5 L830.2 789.4 L826.9 789.2 L823.5 789.1 L821.8 785.2 L819.8 781.5 L822.8 779.8 L824.7 776.5 L828.3 775.9 L831.1 773.9 L830.1 769.5 L834.5 767.5 L835.2 763.8 L836.8 760.6 L834.1 758.8 L830.9 757.9 L828.3 755.9 L827.4 752.8 L829.0 749.8 L829.0 746.8 L829.6 743.8 L829.2 740.7 L832.6 741.6 L836.0 741.4 L839.4 741.9 L842.9 740.7 L846.3 741.7 L847.7 737.9 L851.8 739.1 L853.6 736.1 L857.0 736.0 L855.8 732.6 L856.3 729.3 L858.0 726.0 L858.0 722.7 L853.4 721.7 L854.2 717.0 L852.1 714.2 L850.1 711.4 L849.1 707.7 L847.5 704.0 L848.2 700.0 L846.6 698.2 L843.0 698.5 L839.5 698.1 L835.9 698.5 L832.4 698.5 L828.8 698.2 L825.4 698.9 L822.0 698.2 L822.6 695.1 L822.4 691.9 L821.7 688.8 L820.9 685.7 L821.6 682.6 L820.5 679.4 L822.0 676.3 L820.3 673.7 L819.5 670.7 L817.5 668.2 L816.5 665.3 L817.6 668.9 L816.5 672.2 L814.9 675.5 L815.2 679.0 L813.5 682.0 L811.0 684.5 L808.3 681.4 L811.6 678.3 L810.2 675.2 L810.9 672.1 L809.7 669.1 L809.5 666.0 L809.9 662.9 L811.0 659.8 L811.6 655.9 L813.7 652.5 L815.2 648.9 L812.5 652.2 L808.3 651.6 L803.8 650.7 L802.8 646.2 L804.7 642.0 L808.3 639.3 L809.2 635.9 L810.5 632.7 L812.4 629.7 L810.5 625.8 L811.0 621.5 L810.5 617.9 L809.8 614.3 L809.7 610.6 L813.0 607.7 L816.5 605.1 L815.5 601.0 L816.5 596.9 L818.2 594.3 L818.5 591.1 L821.2 589.0Z" fill="#505a73"/>
<path d="M761.6 704.0 L762.9 700.9 L763.1 697.3 L763.2 693.6 L766.7 691.4 L770.3 690.8 L773.6 689.4 L777.1 688.6 L780.6 687.6 L783.1 685.0 L787.1 684.1 L789.4 687.6 L786.4 690.4 L784.3 693.9 L786.6 691.3 L789.4 690.2 L792.7 690.6 L795.7 690.1 L799.3 688.1 L803.3 688.8 L806.3 691.5 L807.7 695.0 L808.3 698.9 L809.8 702.3 L814.4 703.5 L814.6 707.8 L816.5 712.0 L813.4 715.4 L810.8 718.2 L807.8 720.3 L803.7 720.7 L800.8 722.9 L801.9 726.6 L802.0 730.5 L803.0 733.8 L804.6 737.0 L803.2 740.7 L804.5 744.0 L805.8 747.2 L805.8 750.7 L804.9 754.0 L806.7 758.1 L803.6 760.9 L802.8 764.2 L803.3 767.9 L800.8 770.9 L797.7 771.8 L794.5 772.6 L791.2 772.5 L788.1 773.4 L785.9 776.9 L781.7 776.4 L779.8 780.5 L775.5 779.7 L772.7 781.0 L770.9 784.3 L767.4 784.2 L764.0 784.1 L761.2 785.4 L758.4 786.7 L756.3 789.5 L752.9 789.3 L750.3 791.1 L746.2 791.7 L744.5 788.3 L741.3 787.2 L738.2 786.1 L737.0 782.0 L733.8 781.0 L734.1 777.7 L737.0 775.8 L738.1 772.9 L739.4 770.1 L741.0 767.5 L743.1 765.1 L743.9 762.1 L743.7 758.1 L746.1 754.6 L746.5 750.7 L749.0 745.7 L748.4 742.6 L746.6 740.1 L744.4 737.7 L743.2 734.9 L742.7 731.8 L741.1 729.2 L738.0 727.6 L737.6 724.2 L737.4 720.3 L738.9 716.6 L742.2 716.7 L745.2 715.3 L748.5 715.4 L751.5 714.1 L755.2 713.2 L759.2 713.8 L762.9 712.8 L766.0 710.2 L769.2 707.8 L765.1 706.4Z" fill="#505a73"/>
<path d="M887.1 952.0 L886.4 948.8 L885.3 945.6 L884.6 942.5 L885.4 939.2 L886.4 935.9 L884.0 932.8 L885.7 929.5 L885.0 926.4 L885.8 923.1 L882.9 921.7 L882.0 918.4 L879.6 916.5 L877.4 914.4 L873.4 914.1 L872.9 910.3 L871.6 907.6 L868.9 905.7 L867.5 903.0 L867.1 899.8 L865.2 897.4 L862.4 895.3 L858.5 895.3 L855.8 893.0 L851.8 893.1 L849.7 889.6 L846.1 889.0 L843.0 887.5 L840.7 884.5 L836.7 884.6 L834.2 881.9 L830.5 880.6 L827.8 878.5 L827.8 874.2 L829.1 871.1 L829.1 867.7 L831.9 866.3 L834.7 864.8 L837.7 864.1 L841.1 864.7 L843.2 861.2 L846.5 861.3 L849.7 861.3 L852.6 863.6 L856.6 863.6 L859.1 866.7 L862.6 867.7 L865.9 867.7 L869.1 865.4 L872.4 867.6 L875.6 866.6 L878.9 867.7 L878.9 864.3 L877.6 861.1 L878.3 857.7 L875.8 854.6 L876.0 851.2 L875.3 847.9 L875.1 844.6 L875.2 841.2 L878.3 839.3 L881.5 839.6 L884.6 841.2 L888.1 841.3 L890.0 844.0 L893.0 845.1 L895.4 846.9 L897.9 848.8 L901.1 847.5 L903.3 844.6 L906.1 842.7 L909.2 841.2 L911.2 838.5 L913.8 836.8 L916.8 835.5 L919.4 833.1 L923.1 833.9 L925.9 832.1 L928.0 828.4 L932.0 829.8 L931.8 826.5 L933.3 823.4 L931.8 820.0 L932.1 816.7 L931.4 813.4 L932.5 810.2 L933.9 807.1 L937.0 806.1 L939.8 804.4 L942.6 802.8 L946.1 802.8 L949.0 801.4 L951.7 799.3 L953.2 795.3 L957.0 795.0 L959.8 792.9 L962.8 791.3 L966.1 790.1 L965.9 786.1 L969.8 785.3 L971.0 782.4 L973.6 780.6 L975.4 778.0 L976.6 775.2 L976.0 771.6 L978.2 769.2 L979.4 766.3 L979.7 763.1 L981.8 760.7 L983.1 757.9 L985.2 755.5 L986.0 752.2 L988.8 750.3 L989.4 746.4 L990.7 742.7 L994.5 741.5 L997.6 738.3 L1002.0 738.9 L1005.5 739.1 L1009.0 738.7 L1012.5 738.0 L1015.8 736.4 L1019.4 737.3 L1022.9 737.0 L1026.7 735.2 L1029.6 734.0 L1032.1 731.2 L1035.5 732.0 L1038.2 729.9 L1041.8 731.4 L1044.2 729.4 L1045.9 726.3 L1049.4 725.7 L1049.9 722.5 L1048.4 719.2 L1050.7 716.2 L1050.6 713.0 L1048.1 709.6 L1050.9 706.6 L1050.0 703.3 L1048.3 700.0 L1051.2 697.0 L1050.4 693.7 L1048.5 690.9 L1046.6 688.0 L1045.3 684.9 L1043.1 682.3 L1042.3 678.9 L1041.4 675.8 L1043.0 672.8 L1039.6 669.7 L1042.3 666.6 L1041.4 663.3 L1043.3 660.2 L1042.2 656.9 L1040.8 653.6 L1043.8 650.6 L1043.7 647.4 L1045.1 644.1 L1046.4 640.7 L1047.4 637.3 L1047.8 633.7 L1050.8 631.8 L1054.2 631.3 L1057.6 631.0 L1061.0 630.9 L1064.2 629.6 L1065.2 626.4 L1067.3 624.0 L1069.2 621.4 L1071.0 618.7 L1073.3 616.4 L1076.2 615.1 L1079.2 613.9 L1082.0 612.5 L1081.3 615.4 L1082.1 618.6 L1080.6 621.4 L1080.3 625.2 L1078.8 628.7 L1077.9 632.4 L1078.1 636.6 L1079.3 640.6 L1082.0 642.8 L1083.9 645.7 L1087.0 647.6 L1087.5 651.5 L1085.7 654.2 L1084.3 657.2 L1084.4 660.7 L1082.7 663.5 L1081.7 666.6 L1080.6 669.7 L1077.9 672.0 L1076.4 675.7 L1072.9 675.8 L1069.7 676.2 L1067.6 678.5 L1067.0 681.6 L1066.8 684.8 L1065.8 687.8 L1066.6 691.2 L1064.2 693.9 L1064.9 697.3 L1064.2 700.8 L1066.9 702.5 L1069.0 704.9 L1071.5 706.9 L1073.8 709.0 L1077.6 708.4 L1081.0 709.2 L1083.6 712.4 L1086.8 713.7 L1090.2 714.5 L1090.5 718.8 L1088.8 722.7 L1091.9 722.5 L1094.9 721.4 L1098.0 721.1 L1101.2 721.3 L1103.8 719.3 L1105.9 716.4 L1109.6 715.8 L1111.4 712.7 L1114.8 711.7 L1116.9 708.0 L1121.2 709.5 L1123.8 706.8 L1127.2 706.3 L1130.9 708.7 L1134.0 711.7 L1135.0 714.8 L1137.1 717.3 L1139.9 719.3 L1141.0 722.4 L1142.2 725.4 L1145.0 724.2 L1147.7 722.8 L1150.9 722.4 L1152.5 718.4 L1156.3 719.5 L1159.0 718.0 L1161.6 716.0 L1165.1 716.3 L1167.8 714.7 L1170.4 712.6 L1173.1 710.9 L1176.3 710.3 L1179.2 709.3 L1181.6 706.6 L1184.5 705.6 L1188.2 706.2 L1190.8 704.3 L1193.8 703.4 L1196.8 702.3 L1200.0 702.0 L1241.0 703.0 L1242.0 952.0Z" fill="#505a73"/>
<path d="M1090.2 673.4 L1103.9 672.0 L1114.8 677.5 L1112.1 694.0 L1106.6 703.5 L1091.6 699.4 L1088.8 687.1Z" fill="#505a73"/>
<path d="M1132.6 221.0 L1140.0 216.0 L1136.0 226.0 L1122.0 240.0 L1120.0 238.0Z" fill="#505a73"/>
<path d="M1071.0 678.9 L1082.0 678.9 L1086.1 689.8 L1080.6 695.3 L1072.4 692.6Z" fill="#7ea3cf"/>
<g clip-path="url(#cS)"><path d="M1218.1 145.5 L1219.8 160.6 L1213.9 177.5 L1200.0 195.0 L1190.0 215.0 L1182.0 232.0 L1170.1 251.6 L1153.4 280.0 L1136.0 312.4 L1122.2 349.5 L1112.9 391.2 L1107.1 430.6 L1105.5 500.0 L1103.6 526.3 L1096.7 556.4 L1089.7 568.0 L1080.0 580.0 L960.0 620.0 L960.0 100.0 L1218.0 100.0Z" fill="#b093a5"/></g>
<g clip-path="url(#cGB)"><path d="M822.0 584.0 L830.2 602.4 L830.9 616.0 L824.7 633.8 L816.5 644.8 L809.7 651.6 L790.0 660.0 L790.0 580.0Z" fill="#8e9cca" /></g>
<path d="M802.8 588.7 L795.0 594.0 L787.8 599.6 L789.2 610.6 L794.6 606.5 L802.8 596.9Z" fill="#8e9cca"/>
<path d="M782.3 614.7 L785.0 614.0 L786.0 624.0 L785.5 631.1 L783.0 630.0 L782.5 622.0Z" fill="#8e9cca"/>
<path d="M796.0 618.8 L802.8 614.7 L811.0 627.0 L808.3 633.8 L800.1 629.7Z" fill="#8e9cca"/>
<path d="M801.5 647.5 L806.0 649.0 L811.0 655.7 L801.5 655.7Z" fill="#8e9cca"/>
<path d="M797.4 670.8 L800.0 668.0 L811.0 662.6 L809.0 666.0 L799.0 673.0Z" fill="#505a73"/>
<g clip-path="url(#cIE)"><path d="M800.8 727.0 L808.0 750.7 L802.0 772.0 L788.1 775.0 L785.6 768.4 L788.1 749.4 L794.4 733.0Z" fill="#86a890" /></g>
<path d="M795.7 703.0 L799.0 701.5 L802.0 705.0 L800.0 709.0 L796.5 708.0Z" fill="#2c3651"/>
<g clip-path="url(#cGB)"><path d="M846.0 703.0 L860.0 713.0 L867.0 725.0 L870.5 738.5 L870.0 750.6 L865.9 762.2 L861.3 759.3 L854.9 757.0 L838.7 757.6 L826.0 757.0 L826.0 738.0Z" fill="#b98fa3" /></g>
<g clip-path="url(#cGB)"><path d="M818.0 772.0 L830.0 775.5 L833.5 780.7 L853.2 775.5 L862.4 767.4 L865.9 764.0 L867.6 770.9 L868.2 776.7 L867.0 782.5 L866.0 790.0 L850.0 796.0 L835.0 790.0 L818.0 790.0Z" fill="#5ea59c" /></g>
<g clip-path="url(#cGB)"><path d="M838.7 757.6 L854.9 757.0 L861.3 759.3 L865.9 764.0 L862.4 767.4 L853.2 775.5 L833.5 780.7 L828.0 776.0 L830.0 760.0Z" fill="#7ab3aa" /></g>
<g clip-path="url(#cGB)"><path d="M831.1 800.0 L848.2 798.0 L858.0 806.0 L853.0 814.0 L844.4 826.0 L831.1 823.0 L826.0 815.0Z" fill="#b093bf" /></g>
<g clip-path="url(#cGB)"><path d="M861.9 810.9 L869.0 794.8 L876.3 783.0 L890.0 768.6 L899.3 760.6 L905.5 757.9 L922.5 752.0 L940.0 755.0 L940.0 800.0 L930.0 812.0 L910.0 818.0 L860.0 820.0Z" fill="#7aa46e" /></g>
<circle cx="878" cy="760.5" r="22" fill="#e0a070" fill-opacity="0.75"/>
<g fill="none" stroke="#4e5877" stroke-width="1.5" stroke-linejoin="round"><circle cx="878" cy="760.5" r="22"/><path d="M870.5 738.5 L870.0 750.6 L865.9 762.2 L865.3 764.5 L867.6 770.9 L868.2 776.7 L867.0 782.5"/><path d="M836.0 757.8 L854.9 757.0 L861.3 759.3 L865.9 764.0"/><path d="M830.0 775.5 L833.5 780.7 L853.2 775.5 L862.4 767.4 L865.9 764.0"/><path d="M854.9 743.7 L859.0 750.0"/><path d="M854.3 774.4 L855.5 780.2 L862.4 783.0" stroke-width="1.1"/><path d="M899.3 760.6 L890.0 768.6 L876.3 783.0"/></g>
<g clip-path="url(#cC)"><path d="M868.0 835.0 L928.0 830.0 L930.0 805.0 L948.0 797.0 L965.0 786.0 L973.6 784.4 L992.6 795.8 L1005.8 807.1 L1009.6 820.4 L1003.9 833.6 L992.6 843.1 L945.2 856.4 L907.3 865.8 L888.4 870.6 L872.0 873.0Z" fill="#7aa46e" /></g>
<g clip-path="url(#cC)"><path d="M970.0 781.0 L983.1 757.9 L988.8 750.3 L1002.0 738.0 L1021.0 736.0 L1026.0 748.4 L1019.1 771.1 L1007.7 782.5 L988.8 788.2Z" fill="#7a9fb6" /></g>
<path d="M986.0 748.4 L996.4 744.6 L1001.0 756.0 L996.4 765.5 L990.7 763.6 L992.6 756.0Z" fill="#2c3651"/>
<g fill="none" stroke="#a8b0bd" stroke-width="1.1"><path d="M1051 694 L1072 699"/><path d="M1050 696.5 L1071 701.5"/></g>
<path d="M1047.8 640.6 L1053.3 636.5 L1060.1 634.4 L1068.3 633.0 L1062.0 638.0 L1059.0 646.0 L1055.0 643.3 L1049.2 648.8Z" fill="#2c3651"/>
<g clip-path="url(#cC)"><path d="M1026.7 730.0 L1028.6 748.4 L1019.1 780.6 L1013.4 795.8 L1013.4 810.9 L1019.1 824.2 L1032.3 832.7 L1051.2 827.8 L1096.6 799.4 L1119.4 773.8 L1136.4 751.0 L1142.0 731.2 L1150.0 700.0 L1071.0 698.0 L1040.0 697.0Z" fill="#cd8a64" /></g>
<g clip-path="url(#cC)"><path d="M1030.0 600.0 L1095.0 600.0 L1095.0 698.0 L1071.0 698.0 L1040.0 697.0Z" fill="#7ea3cf" /></g>
<path d="M1026.1 739.5 L1029.5 745.6 L1029.2 755.8 L1024.0 771.6 L1014.3 780.0 L1018.2 763.7 L1022.8 744.0Z" fill="#a5b0b8" stroke="#4e5877" stroke-width="1.2"/>
<path d="M1021 752 L1027 753 M1017 766 L1024 769" stroke="#4e5877" stroke-width="1.1"/>
<path d="M830 712 L832.5 713 L830 719 L827.5 719 Z" fill="#c49a5a"/>
<path d="M784 461 L792 458 L797 462 L793 467 L786 468 Z M883 522 L890 513 L893 514 L889 528 L886 542 L884 540 L879 531 Z M853 568 L858 569 L857 574 L852 573Z M760 95 L771 84 L772 90 L763 98Z M1210.6,637 L1212.3,612 L1226.7,604.8 Z M1150 686 L1156 686 L1156 692 L1150 692Z M1233 527 L1241 524 L1241 538 L1231 533Z" fill="#505a73"/>
<g fill="none" stroke="#2c3651" stroke-linecap="round" stroke-linejoin="round"><path d="M1059.9 411.5 L1063.7 412.0 L1065.8 415.4 L1069.0 416.8 L1072.0 418.7 L1074.9 417.8 L1077.3 415.4 L1080.4 414.9 L1083.5 414.6 L1086.5 413.9 L1088.4 411.2 L1088.9 407.8 L1090.6 405.1 L1093.1 402.7 L1093.8 399.4" stroke-width="3.2"/><path d="M1038.0 418.7 L1041.2 418.2 L1044.5 419.5 L1047.8 419.0 L1051.0 418.2 L1054.2 419.0 L1057.5 418.7" stroke-width="2"/><path d="M1023.6 435.7 L1026.7 434.7 L1029.6 436.7 L1032.7 436.4 L1035.7 437.0 L1038.9 435.7 L1041.7 437.5 L1044.7 438.1 L1047.8 438.0" stroke-width="2"/><path d="M1016.3 445.4 L1019.7 445.8 L1023.0 446.8 L1026.6 446.1 L1030.0 446.6 L1033.3 447.8" stroke-width="1.6"/><path d="M999.4 462.3 L1002.8 462.7 L1006.0 461.2 L1009.4 461.8 L1012.6 460.3 L1016.1 461.6 L1019.2 459.3 L1022.7 460.5 L1026.0 460.0" stroke-width="1.8"/><path d="M987.3 501.0 L990.3 500.6 L993.4 501.6 L996.4 501.2 L999.4 500.0 L1002.4 501.0 L1005.4 499.1 L1008.5 499.7 L1011.5 500.0 L1014.5 500.8 L1017.5 499.5 L1020.6 500.1 L1023.6 499.8" stroke-width="2"/><path d="M992.1 530.0 L995.5 529.9 L998.3 527.5 L1001.6 526.8 L1005.2 527.3 L1008.5 526.8 L1011.5 525.1 L1014.8 524.7 L1017.9 523.2 L1021.2 522.8" stroke-width="2.2"/><path d="M994.5 549.5 L997.0 547.2 L999.5 544.9 L1001.5 542.0 L1003.5 539.2 L1006.3 537.1 L1009.0 535.0" stroke-width="1.8"/><path d="M997.0 564.0 L999.7 561.4 L1003.3 560.5 L1006.6 559.0" stroke-width="3"/><path d="M1079.2 503.5 L1081.1 506.2 L1083.4 508.5 L1084.0 512.1 L1086.5 514.4 L1088.4 517.0 L1089.6 520.1 L1091.4 522.9 L1093.8 525.2" stroke-width="2"/><path d="M1081.7 544.6 L1082.5 547.6 L1083.3 550.6 L1083.9 553.6 L1084.9 556.6 L1085.0 559.7 L1086.4 562.5 L1086.5 565.7 L1086.5 568.8" stroke-width="2.5"/><path d="M1099.0 356.4 L1102.1 354.8 L1105.5 354.2 L1108.8 353.3 L1112.0 352.0" stroke-width="2"/><path d="M1122.2 303.2 L1125.5 302.7 L1128.7 301.9 L1131.9 301.2 L1135.0 300.0" stroke-width="1.8"/><path d="M1131.5 279.0 L1134.7 277.0 L1138.3 276.2 L1142.0 276.0" stroke-width="1.8"/><path d="M1144.2 264.2 L1146.9 262.2 L1150.0 261.1 L1152.9 259.7 L1156.2 259.2 L1158.7 256.9 L1162.3 257.0 L1165.0 255.0" stroke-width="2"/><path d="M1161.0 226.3 L1164.4 225.2 L1167.7 223.3 L1171.6 225.2 L1175.0 224.0 L1178.5 222.3 L1181.8 220.3 L1185.0 218.0" stroke-width="1.6"/><path d="M1154.7 243.2 L1158.1 242.1 L1161.0 239.8 L1164.8 239.7 L1168.0 238.0" stroke-width="1.4"/><path d="M1150.0 204.0 L1153.2 202.9 L1156.6 202.4 L1159.9 201.8 L1163.4 202.1 L1166.7 202.1 L1170.0 201.0 L1172.8 198.8 L1176.2 197.6 L1179.5 196.7 L1182.3 194.3 L1186.0 194.0" stroke-width="1.5"/><path d="M1165.0 186.0 L1167.9 184.6 L1170.6 182.9 L1173.9 183.3 L1177.1 183.0 L1180.0 182.0 L1182.9 181.0 L1185.6 179.6 L1188.5 178.7 L1190.8 176.4 L1194.0 176.0" stroke-width="1.5"/><path d="M1197.8 161.0 L1201.1 162.3 L1203.9 164.6 L1206.9 166.3 L1210.0 168.0" stroke-width="1.6"/><path d="M1217.8 146.3 L1220.3 148.9 L1221.7 152.3 L1223.3 155.5 L1226.0 158.0 L1226.6 161.7 L1225.4 165.1 L1224.1 168.4 L1224.0 172.0" stroke-width="1.6"/><path d="M1124.0 620.0 L1124.6 616.5 L1128.1 614.9 L1129.3 611.8 L1131.0 609.0 L1134.6 609.6 L1138.0 611.0" stroke-width="1.5"/></g>
<g fill="#2c3651"><path d="M1112.9 591.2 L1122.2 572.7 L1131.4 561.0 L1140.7 565.7 L1138.4 577.3 L1126.8 582.0 L1122.2 588.9Z"/><path d="M1154.6 577.3 L1156.0 580.0 L1147.6 598.0 L1144.0 610.0 L1142.0 607.0 L1146.0 592.0Z"/><path d="M1161.5 556.0 L1180.0 553.0 L1201.0 552.0 L1198.0 560.0 L1180.0 562.0 L1165.0 566.0Z"/><path d="M1215.7 211.6 L1230.0 217.0 L1241.0 222.0 L1241.0 226.0 L1228.0 221.0 L1215.0 214.0Z"/><path d="M1190.5 241.0 L1200.0 246.0 L1207.3 251.6 L1212.0 256.0 L1225.0 266.0 L1236.8 279.0 L1234.0 280.0 L1222.0 270.0 L1208.0 258.0 L1200.0 251.0 L1190.0 243.0Z"/><path d="M1140.0 420.0 L1148.0 428.0 L1147.0 442.0 L1143.0 440.0Z"/></g>
<g fill="none" stroke="#3a4461" stroke-width="1.5" stroke-linejoin="round"><path d="M1241.0 205.0 L1236.7 204.7 L1232.6 206.3 L1228.4 206.3 L1224.2 206.8 L1219.9 206.5 L1215.7 207.0 L1211.5 207.4 L1210.0 211.9 L1210.3 216.8 L1207.7 221.0 L1207.0 225.7 L1207.0 230.5 L1203.0 229.3 L1198.9 228.7 L1194.7 228.4 L1191.9 232.6 L1187.5 235.3 L1184.2 239.0 L1180.9 242.6 L1178.7 247.0 L1176.4 251.2 L1174.7 255.8 L1177.2 259.6 L1177.7 264.1 L1178.9 268.4 L1176.3 272.1 L1176.0 277.2 L1172.6 280.5 L1169.0 283.6 L1167.4 287.9 L1164.3 291.3 L1163.0 295.8 L1160.3 299.4 L1159.0 304.3 L1153.7 305.8 L1153.1 311.2 L1148.8 313.6 L1148.5 317.6 L1148.3 321.7 L1148.0 325.7 L1148.1 329.8 L1148.1 333.9 L1147.6 337.9 L1146.5 342.2 L1145.2 346.4 L1142.6 350.1 L1142.3 354.7 L1139.0 358.2 L1137.6 362.3 L1135.8 366.4 L1135.5 371.0 L1133.7 375.0 L1137.5 376.8 L1140.7 379.6 L1139.6 383.6 L1139.9 387.7 L1139.6 391.7 L1139.5 395.8 L1134.9 394.7 L1130.4 393.3 L1125.6 393.5 L1122.0 396.7 L1117.5 398.1 L1115.9 401.9 L1113.4 405.4 L1112.0 409.3 L1113.0 414.3 L1109.6 417.3 L1108.4 421.4 L1105.9 424.8 L1108.7 429.4 L1110.0 434.4 L1109.4 439.8 L1109.2 444.0 L1110.3 448.2 L1108.8 452.3 L1109.2 456.5 L1107.7 460.6 L1111.3 464.9 L1109.4 469.0 L1110.9 473.2 L1107.4 477.3 L1108.3 481.5 L1112.7 483.2 L1115.7 486.2 L1116.7 491.0 L1119.8 493.9 L1117.3 498.2 L1114.5 502.3 L1110.6 505.5 L1112.9 509.8 L1113.2 514.7 L1113.3 519.6 L1115.2 524.0 L1113.6 528.3 L1109.6 531.2 L1109.7 536.5 L1106.3 539.7 L1103.4 543.2 L1101.3 547.2 L1101.7 551.5 L1100.7 555.7 L1100.1 559.9 L1100.1 564.2 L1100.0 568.5 L1099.0 572.7"/><path d="M1145.0 731.0 L1145.9 735.4 L1144.6 739.6 L1143.6 743.9 L1142.3 748.1 L1145.1 752.7 L1142.0 756.7 L1144.3 760.9 L1147.4 764.7 L1148.0 769.8 L1150.6 773.8 L1150.4 778.4 L1153.3 782.5 L1154.9 786.8 L1154.1 791.6 L1154.9 796.1 L1157.8 800.1 L1156.3 805.0"/><path d="M1108.0 825.0 L1112.5 823.7 L1114.7 818.3 L1120.2 818.7 L1123.7 815.5 L1127.9 813.6 L1132.0 812.1 L1135.5 809.4 L1139.7 808.2 L1144.3 807.8 L1147.8 805.0 L1152.3 806.2 L1157.0 806.7 L1162.1 805.9 L1166.1 809.1 L1170.5 810.7 L1172.7 814.2 L1176.1 816.5 L1179.9 818.4 L1181.9 822.0 L1186.7 822.3 L1190.7 825.5 L1195.7 824.7 L1199.9 827.3 L1204.6 827.8 L1206.7 831.8 L1209.7 835.0 L1212.2 838.7 L1216.6 840.9 L1218.8 844.8 L1215.2 847.3 L1212.2 850.4 L1208.2 852.6 L1205.1 855.6 L1201.7 858.4 L1199.0 861.9 L1195.0 861.7 L1191.1 860.3 L1187.0 861.1 L1183.0 861.2 L1179.0 861.2 L1175.0 860.7 L1171.0 860.3 L1167.1 859.1 L1163.1 859.2 L1159.1 859.0 L1155.2 860.2 L1151.8 862.5 L1147.4 862.3 L1144.3 865.7 L1140.0 865.7 L1136.4 867.6 L1133.0 865.3 L1130.0 862.6 L1127.5 859.4 L1125.7 855.6 L1120.9 854.7 L1119.4 850.5 L1116.9 846.5 L1116.4 841.6 L1114.2 837.5 L1109.9 834.4 L1110.3 829.1 L1108.0 825.0"/><path d="M1136.4 867.6 L1132.9 869.8 L1129.5 872.0 L1126.8 875.3 L1123.6 877.9 L1119.4 879.0 L1115.6 880.7 L1111.5 881.3 L1107.5 882.4 L1103.7 884.3 L1099.3 883.8 L1095.4 885.2 L1091.8 887.9 L1087.5 887.8 L1083.9 890.3 L1079.6 890.3 L1075.5 890.4 L1071.5 889.4 L1067.4 889.3 L1063.4 889.6 L1059.3 889.3 L1055.3 891.3 L1051.2 890.3 L1056.3 890.6 L1059.2 894.7 L1063.3 896.7 L1067.2 899.2 L1071.0 901.7 L1075.1 902.5 L1079.1 903.9 L1083.2 904.6 L1087.3 905.4 L1091.7 904.0 L1095.5 906.5 L1099.8 906.2 L1104.0 906.0 L1108.0 907.3 L1112.0 908.0 L1116.1 907.4 L1119.8 910.2 L1124.1 908.1 L1128.0 909.3 L1131.8 911.4 L1136.0 910.2 L1140.0 910.8 L1143.9 912.0 L1147.8 913.0 L1152.3 913.4 L1156.5 912.8 L1160.4 909.9 L1164.7 909.0 L1169.1 909.2 L1173.2 907.9 L1177.4 906.6 L1181.9 907.3 L1184.1 903.0 L1183.9 898.1 L1185.4 893.7 L1186.7 889.2 L1187.6 884.6 L1189.8 880.9 L1191.4 877.0 L1193.8 873.5 L1194.8 869.3 L1197.1 865.7 L1199.0 861.9"/><path d="M1011.4 839.0 L1015.4 840.3 L1018.9 842.6 L1023.1 843.7 L1025.2 848.2 L1029.5 849.2 L1033.0 851.4 L1036.7 853.2 L1039.8 856.2 L1038.0 860.1 L1037.4 864.2 L1038.1 868.5 L1036.2 872.4 L1034.9 876.3 L1035.9 880.7 L1034.1 884.6 L1030.3 887.1 L1027.5 890.9 L1024.1 893.9 L1019.9 896.0 L1017.3 899.5 L1016.8 904.0 L1014.4 907.6 L1012.0 911.3 L1011.2 915.6 L1009.4 919.5 L1007.9 923.5 L1005.7 927.2"/><path d="M1019.9 896.0 L1024.5 895.8 L1029.0 895.4 L1033.5 894.6 L1037.4 890.8 L1042.3 892.3 L1046.6 890.2 L1051.2 890.3"/><path d="M1068.2 913.0 L1064.2 915.2 L1061.5 919.1 L1058.6 922.9 L1054.0 924.4 L1049.7 924.2 L1045.4 924.7 L1041.1 925.1 L1037.0 926.5 L1032.6 926.3 L1028.4 927.2 L1023.8 927.8 L1019.3 929.2 L1014.5 928.9 L1010.0 930.0"/><path d="M949.0 803.3 L950.9 810.9 L955.1 812.1 L959.0 813.8 L962.3 816.6 L965.4 819.2 L969.3 821.0 L972.2 823.7 L973.6 828.0 L978.8 826.4 L983.1 829.8 L985.3 834.1 L988.8 837.4 L994.7 838.3 L998.3 843.1 L1002.7 844.2 L1007.1 842.9 L1011.5 843.1 L1015.3 848.8 L1020.5 849.7 L1024.8 852.6 L1029.2 853.5 L1034.1 853.1 L1037.3 857.6 L1041.8 858.3 L1040.1 862.0 L1039.0 866.0 L1038.2 870.0 L1037.9 874.3 L1034.2 877.2 L1033.1 881.7 L1031.5 886.0 L1030.5 890.5"/><path d="M988.0 788.0 L990.8 791.9 L996.2 792.9 L1000.2 795.4 L1002.7 799.7 L1005.8 803.3 L1006.4 807.6 L1006.9 812.0 L1006.6 816.4 L1010.3 820.3 L1010.8 824.7 L1008.1 829.4 L1009.6 833.6 L1011.4 839.0"/><path d="M1218.8 844.8 L1223.3 845.5 L1228.0 845.5 L1232.6 846.1 L1236.8 848.0 L1241.0 850.0"/><path d="M1187.6 884.6 L1191.7 884.1 L1195.8 883.2 L1200.0 884.3 L1204.0 882.4 L1208.1 882.4 L1212.3 883.6 L1216.3 881.0 L1220.5 882.0 L1224.5 880.9 L1228.7 881.0 L1232.8 881.1 L1236.8 878.8 L1241.0 880.0"/><path d="M1147.8 913.0 L1149.7 916.7 L1151.9 920.3 L1153.7 924.1 L1155.9 927.7 L1157.4 931.7 L1160.0 935.0 L1163.9 932.6 L1168.0 933.0 L1172.1 933.2 L1176.3 935.1 L1180.3 934.0 L1184.2 932.3 L1188.3 932.2 L1192.4 932.4 L1196.3 930.8 L1200.6 933.3 L1204.6 932.6 L1208.6 932.4 L1212.6 931.2 L1216.8 932.7 L1220.8 931.7 L1224.8 930.4 L1228.8 929.7 L1232.9 930.3 L1236.9 930.0 L1241.0 930.0"/><path d="M784.3 692.6 L781.1 695.7 L779.1 699.9 L775.5 702.7 L774.8 707.7 L770.5 710.3 L773.4 713.8 L777.1 716.4 L780.6 719.1 L784.6 715.6 L788.1 711.6 L792.5 713.1 L793.3 718.2 L797.0 720.4 L802.0 723.0"/><path d="M871.6 670.3 L867.8 676.6 L870.3 680.4 L867.0 682.9 L863.7 685.3 L861.7 689.2 L859.8 693.2 L855.2 694.3 L850.0 696.0"/><path d="M1050.5 692.6 L1055.0 692.1 L1058.4 695.8 L1062.9 695.3 L1066.8 697.3 L1071.0 698.0"/></g>
<g font-family="Liberation Sans, sans-serif" font-weight="700" font-size="16.5" letter-spacing="3.6" fill="#fff" stroke="#404040" stroke-width="2.1" stroke-linejoin="round" style="paint-order:stroke fill"><text x="1156.8" y="365.7">SWEDEN</text><text x="1007.4" y="502.5">NORWAY</text><text x="1021.8" y="671.5">DENMARK</text><text x="731.8" y="748.1">IRELAND</text><text x="1021.0" y="807.0">GERMANY</text><text x="907.7" y="891.3">FRANCE</text><text x="1184.9" y="780.5">POLAND</text><text x="1115.3" y="843.3">CZECHIA</text><text x="1177.3" y="869.5">SLOVAKIA</text><text x="1098.3" y="897.0">AUSTRIA</text><text x="1136.6" y="943.9">CROATIA</text></g>
<rect x="695" y="48" width="1" height="902" fill="#232c48"/><rect x="695" y="48" width="546" height="1" fill="#232c48"/>
<g><rect x="705" y="58" width="32" height="100" rx="16" fill="#fff"/><rect x="705" y="91" width="32" height="1" fill="#2c3651"/><rect x="705" y="124.5" width="32" height="1" fill="#2c3651"/><circle cx="721" cy="182" r="16.3" fill="#fff"/><g fill="none" stroke="#111" stroke-width="1.6" stroke-linecap="round"><circle cx="720" cy="74" r="5.5"/><path d="M724 78 L728.5 82.5 M717.3 74 H722.7 M720 71.3 V76.7"/><circle cx="720" cy="141" r="5.5"/><path d="M724 145 L728.5 149.5 M717.3 141 H722.7"/><path d="M715.2 105 A6.3 6.3 0 1 0 717 103.2"/><path d="M714.5 102 L714.8 105.6 L718.3 105.2" stroke-linejoin="round"/></g><circle cx="721" cy="107.8" r="1.6" fill="#111"/><circle cx="721" cy="182" r="7" fill="#fff" stroke="#111" stroke-width="1.5"/><path d="M713.3 182 A7.7 7.7 0 0 0 728.7 182 Z" fill="#111"/></g>
</svg></div>
</body></html>
